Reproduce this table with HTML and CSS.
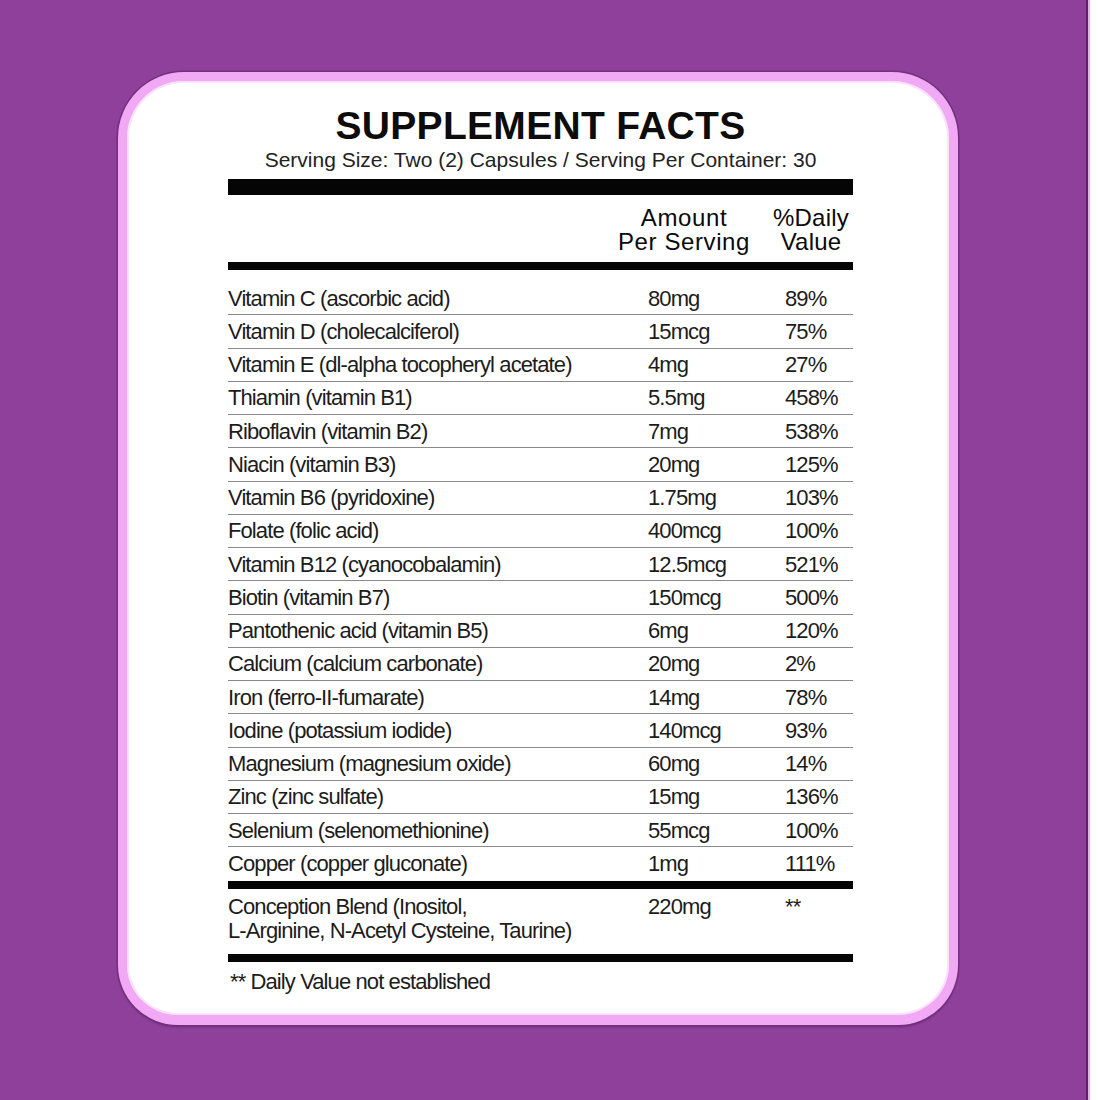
FILE: index.html
```html
<!DOCTYPE html>
<html lang="en">
<head>
<meta charset="utf-8">
<title>Supplement Facts</title>
<link rel="stylesheet" href="styles.css">
</head>
<body>
<div class="page">
  <div class="canvas">
    <div class="card">
      <div class="facts">
        <h1 class="title">SUPPLEMENT FACTS</h1>
        <p class="serving">Serving Size: Two (2) Capsules / Serving Per Container: 30</p>
        <div class="bar bar-thick"></div>
        <div class="head">
          <div class="head-amount">Amount<br>Per Serving</div>
          <div class="head-dv">%Daily<br>Value</div>
        </div>
        <div class="bar bar-mid"></div>
        <div class="rows">
          <div class="row"><span class="name">Vitamin C (ascorbic acid)</span><span class="amt">80mg</span><span class="dv">89%</span></div>
          <div class="row"><span class="name">Vitamin D (cholecalciferol)</span><span class="amt">15mcg</span><span class="dv">75%</span></div>
          <div class="row"><span class="name">Vitamin E (dl-alpha tocopheryl acetate)</span><span class="amt">4mg</span><span class="dv">27%</span></div>
          <div class="row"><span class="name">Thiamin (vitamin B1)</span><span class="amt">5.5mg</span><span class="dv">458%</span></div>
          <div class="row"><span class="name">Riboflavin (vitamin B2)</span><span class="amt">7mg</span><span class="dv">538%</span></div>
          <div class="row"><span class="name">Niacin (vitamin B3)</span><span class="amt">20mg</span><span class="dv">125%</span></div>
          <div class="row"><span class="name">Vitamin B6 (pyridoxine)</span><span class="amt">1.75mg</span><span class="dv">103%</span></div>
          <div class="row"><span class="name">Folate (folic acid)</span><span class="amt">400mcg</span><span class="dv">100%</span></div>
          <div class="row"><span class="name">Vitamin B12 (cyanocobalamin)</span><span class="amt">12.5mcg</span><span class="dv">521%</span></div>
          <div class="row"><span class="name">Biotin (vitamin B7)</span><span class="amt">150mcg</span><span class="dv">500%</span></div>
          <div class="row"><span class="name">Pantothenic acid (vitamin B5)</span><span class="amt">6mg</span><span class="dv">120%</span></div>
          <div class="row"><span class="name">Calcium (calcium carbonate)</span><span class="amt">20mg</span><span class="dv">2%</span></div>
          <div class="row"><span class="name">Iron (ferro-II-fumarate)</span><span class="amt">14mg</span><span class="dv">78%</span></div>
          <div class="row"><span class="name">Iodine (potassium iodide)</span><span class="amt">140mcg</span><span class="dv">93%</span></div>
          <div class="row"><span class="name">Magnesium (magnesium oxide)</span><span class="amt">60mg</span><span class="dv">14%</span></div>
          <div class="row"><span class="name">Zinc (zinc sulfate)</span><span class="amt">15mg</span><span class="dv">136%</span></div>
          <div class="row"><span class="name">Selenium (selenomethionine)</span><span class="amt">55mcg</span><span class="dv">100%</span></div>
          <div class="row"><span class="name">Copper (copper gluconate)</span><span class="amt">1mg</span><span class="dv">111%</span></div>
        </div>
        <div class="bar bar-mid"></div>
        <div class="blend">
          <span class="name">Conception Blend (Inositol,<br>L-Arginine, N-Acetyl Cysteine, Taurine)</span><span class="amt">220mg</span><span class="dv">**</span>
        </div>
        <div class="bar bar-mid"></div>
        <p class="note">** Daily Value not established</p>
      </div>
    </div>
  </div>
  <div class="edge"></div>
</div>
</body>
</html>
```

FILE: styles.css
```css
html, body {
  margin: 0;
  padding: 0;
}
body {
  background: #ffffff;
  font-family: "Liberation Sans", Arial, sans-serif;
  color: #1c1c1c;
}
.page {
  display: flex;
  width: 1100px;
  height: 1100px;
  overflow: hidden;
}
.canvas {
  flex: 0 0 1086px;
  background: #8e409a;
  padding: 72px 0 0 118px;
  box-sizing: border-box;
}
.edge {
  flex: 1;
  background: #ffffff;
  border-left: 2px solid #5e2468;
  box-shadow: inset 2px 0 0 #e2b4e8;
}
.card {
  width: 840px;
  height: 953px;
  box-sizing: border-box;
  background: #ffffff;
  border: 9px solid #f1a8f5;
  border-bottom-width: 10px;
  border-radius: 66px 66px 60px 60px;
  box-shadow: 0 0 0 1.5px #74307f, 0 2px 2px #6a2a74, inset 0 0 0 2px #fbe2fc;
  padding: 23px 0 0 101px;
}
.facts {
  width: 625px;
}
.title {
  margin: 0;
  font-weight: bold;
  font-size: 39px;
  letter-spacing: 0.3px;
  line-height: 44px;
  text-align: center;
  color: #0c0c0c;
}
.serving {
  margin: 0;
  font-size: 21px;
  line-height: 24px;
  text-align: center;
  color: #222;
}
.bar {
  background: #050505;
}
.bar-thick {
  height: 16px;
  margin-top: 7px;
}
.bar-mid {
  height: 8px;
}
.head {
  display: flex;
  justify-content: flex-end;
  gap: 19px;
  margin-top: 11px;
  margin-bottom: 8px;
  font-size: 24px;
  letter-spacing: 0.6px;
  line-height: 24px;
  color: #0a0a0a;
  white-space: nowrap;
}
.head-amount {
  text-align: center;
}
.head-dv {
  width: 84px;
  text-align: center;
  letter-spacing: 0.2px;
}
.rows {
  margin-top: 12px;
}
.row {
  display: grid;
  grid-template-columns: 420px 137px 68px;
  align-items: center;
  height: 33.25px;
  box-sizing: border-box;
  border-bottom: 1.5px solid #8a8a8a;
  font-size: 22px;
  letter-spacing: -0.9px;
  line-height: 31px;
  white-space: nowrap;
}
.row:last-child {
  border-bottom: none;
}
.blend {
  display: grid;
  grid-template-columns: 420px 137px 68px;
  align-items: start;
  padding: 6px 0 11px;
  font-size: 22px;
  letter-spacing: -0.9px;
  line-height: 24px;
}
.note {
  margin: 8px 0 0 2px;
  font-size: 22px;
  letter-spacing: -0.9px;
  line-height: 24px;
}
```
